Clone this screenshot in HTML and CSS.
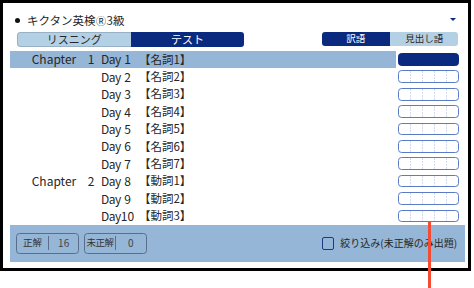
FILE: index.html
```html
<!DOCTYPE html>
<html lang="ja">
<head>
<meta charset="utf-8">
<link rel="stylesheet" href="styles.css">
</head>
<body>
<div class="frame">
  <div class="header">
    <span class="bullet"></span>
    <span class="title">キクタン英検<span class="reg">Ⓡ</span>3級</span>
    <span class="caret"></span>
  </div>
  <div class="toolbar">
    <div class="tabs">
      <div class="tab light">リスニング</div>
      <div class="tab dark">テスト</div>
    </div>
    <div class="seg">
      <div class="dark">訳語</div>
      <div class="light">見出し語</div>
    </div>
  </div>
  <div class="list">
    <div class="row sel"><div class="label"><span class="ch"><span>Chapter</span><span>1</span></span><span class="dy"><span class="d">Day</span><span>1</span></span><span class="nm">【名詞1】</span></div><div class="ans"></div></div>
    <div class="row"><div class="label"><span class="ch"></span><span class="dy"><span class="d">Day</span><span>2</span></span><span class="nm">【名詞2】</span></div><div class="ans"></div></div>
    <div class="row"><div class="label"><span class="ch"></span><span class="dy"><span class="d">Day</span><span>3</span></span><span class="nm">【名詞3】</span></div><div class="ans"></div></div>
    <div class="row"><div class="label"><span class="ch"></span><span class="dy"><span class="d">Day</span><span>4</span></span><span class="nm">【名詞4】</span></div><div class="ans"></div></div>
    <div class="row"><div class="label"><span class="ch"></span><span class="dy"><span class="d">Day</span><span>5</span></span><span class="nm">【名詞5】</span></div><div class="ans"></div></div>
    <div class="row"><div class="label"><span class="ch"></span><span class="dy"><span class="d">Day</span><span>6</span></span><span class="nm">【名詞6】</span></div><div class="ans"></div></div>
    <div class="row"><div class="label"><span class="ch"></span><span class="dy"><span class="d">Day</span><span>7</span></span><span class="nm">【名詞7】</span></div><div class="ans"></div></div>
    <div class="row"><div class="label"><span class="ch"><span>Chapter</span><span>2</span></span><span class="dy"><span class="d">Day</span><span>8</span></span><span class="nm">【動詞1】</span></div><div class="ans"></div></div>
    <div class="row"><div class="label"><span class="ch"></span><span class="dy"><span class="d">Day</span><span>9</span></span><span class="nm">【動詞2】</span></div><div class="ans"></div></div>
    <div class="row"><div class="label"><span class="ch"></span><span class="dy"><span class="d">Day</span><span>10</span></span><span class="nm">【動詞3】</span></div><div class="ans"></div></div>
  </div>
  <div class="bar">
    <div class="counter c1"><span class="k">正解</span><span class="v">16</span></div>
    <div class="counter c2"><span class="k">未正解</span><span class="v">0</span></div>
    <div class="filter"><span class="chk"></span><span class="flabel">絞り込み(未正解のみ出題)</span></div>
  </div>
</div>
<div class="pointer"></div>
</body>
</html>
```
FILE: styles.css
```css
* { box-sizing: border-box; }
html, body { margin: 0; padding: 0; background: #fff; }
body {
  width: 474px;
  height: 288px;
  position: relative;
  overflow: hidden;
  font-family: "Noto Sans CJK JP", "Noto Sans", sans-serif;
  color: #262626;
}
.frame {
  width: 471px;
  height: 271px;
  border: 3px solid #000;
  background: #fff;
  display: flex;
  flex-direction: column;
  padding: 0 3.3px 0 7px;
}
.header {
  display: flex;
  align-items: center;
  height: 28.7px;
  padding: 6px 0 0 5px;
  flex: none;
}
.bullet {
  width: 5px;
  height: 5px;
  border-radius: 50%;
  background: #111;
  margin-right: 7px;
}
.title { font-size: 11.5px; line-height: 1; white-space: nowrap; }
.reg { font-size: 10px; margin: 0 0.5px; }
.caret {
  margin-left: auto;
  margin-right: 8.7px;
  width: 0;
  height: 0;
  border-left: 3px solid transparent;
  border-right: 3px solid transparent;
  border-top: 3.5px solid #0a2a7f;
  margin-top: -1px;
}
.toolbar {
  display: flex;
  align-items: flex-start;
  height: 15px;
  flex: none;
}
.tabs {
  display: flex;
  margin-left: 6.7px;
  width: 227.3px;
  height: 15px;
  border-radius: 3px;
  overflow: hidden;
}
.tab {
  flex: 1;
  display: flex;
  align-items: center;
  justify-content: center;
  font-size: 11px;
  line-height: 1;
}
.light { background: #b4d0e4; color: #262626; }
.dark { background: #0a2a7f; color: #fff; }
.tab.light { border: 1px solid #98b1c5; border-right: none; border-radius: 3px 0 0 3px; }
.seg {
  display: flex;
  margin-left: auto;
  margin-right: 6.4px;
  margin-top: 0.6px;
  width: 136.6px;
  height: 13.7px;
  border-radius: 3px;
  overflow: hidden;
}
.seg div {
  flex: 1;
  display: flex;
  align-items: center;
  justify-content: center;
  font-size: 9.5px;
  line-height: 1;
}
.list {
  margin-top: 4px;
  flex: none;
}
.row {
  display: flex;
  align-items: center;
  height: 17.4px;
}
.label {
  width: 386px;
  height: 100%;
  display: flex;
  align-items: center;
  padding-left: 21.7px;
  font-size: 12px;
  line-height: 1;
  white-space: nowrap;
}
.row.sel .label { background: #95b6d6; }
.ch {
  display: inline-flex;
  justify-content: space-between;
  width: 62.8px;
}
.dy {
  display: inline-flex;
  justify-content: space-between;
  width: 30px;
  margin-left: 6.5px;
}
.dy .d { letter-spacing: -0.5px; }
.nm { margin-left: 8px; font-size: 11.5px; }
.ans {
  margin-left: 2.3px;
  width: 60.7px;
  height: 12.7px;
  border: 1px solid #5b7bc4;
  border-radius: 3.5px;
  background:
    repeating-linear-gradient(to bottom, transparent 0 2px, #fff 2px 3px),
    repeating-linear-gradient(to right, transparent 0 11px, #d3d9ee 11px 12px);
}
.row.sel .ans {
  background: #0a2a7f;
  border-color: #0a2a7f;
}
.bar {
  height: 37.3px;
  background: #95b6d6;
  display: flex;
  align-items: center;
  padding: 0 7.7px 0 6px;
  flex: none;
}
.counter {
  display: flex;
  align-items: center;
  height: 20.6px;
  border: 1px solid #5a6e8c;
  border-radius: 3.5px;
  font-size: 9.5px;
  line-height: 1;
  color: #333;
  white-space: nowrap;
}
.c1 { width: 63.3px; }
.c2 { width: 62.7px; margin-left: 5px; }
.counter .k {
  display: flex;
  align-items: center;
  justify-content: center;
  height: 14px;
  border-right: 1px solid #5a6e8c;
}
.c1 .k { width: 32px; }
.c2 .k { width: 30.4px; letter-spacing: -0.5px; }
.counter .v {
  flex: 1;
  text-align: center;
  color: #444;
  font-size: 10px;
}
.filter {
  margin-left: auto;
  display: flex;
  align-items: center;
}
.chk {
  width: 12.5px;
  height: 13px;
  border: 1.5px solid #1d3b80;
  border-radius: 2px;
  margin-right: 6px;
}
.flabel { font-size: 10px; line-height: 1; color: #262626; }
.pointer {
  position: absolute;
  left: 427.5px;
  top: 221px;
  width: 3.5px;
  height: 67px;
  background: #f44b35;
}
```
